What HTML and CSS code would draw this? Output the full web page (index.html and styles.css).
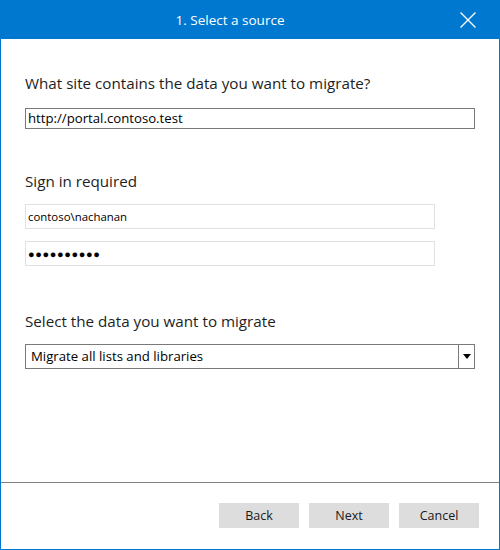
FILE: index.html
```html
<!DOCTYPE html>
<html>
<head>
<meta charset="utf-8">
<link rel="stylesheet" href="styles.css">
</head>
<body>
<div class="window">
  <div class="titlebar">
    <div class="title">1. Select a source</div>
    <div class="close">
      <svg width="16" height="16" viewBox="0 0 16 16"><path d="M0.5 0.5 L15.5 15.5 M15.5 0.5 L0.5 15.5" stroke="#ffffff" stroke-width="1.4" fill="none"/></svg>
    </div>
  </div>
  <div class="content">
    <div class="heading h1">What site contains the data you want to migrate?</div>
    <div class="field url">http://portal.contoso.test</div>
    <div class="heading h2">Sign in required</div>
    <div class="field small user">contoso\nachanan</div>
    <div class="field small pass">●●●●●●●●●●</div>
    <div class="heading h3">Select the data you want to migrate</div>
    <div class="select">
      <div class="select-text">Migrate all lists and libraries</div>
      <div class="select-btn"><svg width="8" height="5" viewBox="0 0 8 5"><path d="M0 0 H8 L4 5 Z" fill="#000"/></svg></div>
    </div>
  </div>
  <div class="footer">
    <div class="btn">Back</div>
    <div class="btn">Next</div>
    <div class="btn">Cancel</div>
  </div>
</div>
</body>
</html>
```
FILE: styles.css
```css
html, body { margin: 0; padding: 0; background: #fff; }
body { font-family: "Open Sans", "Noto Sans", sans-serif; color: #1a1a1a; }
.window {
  width: 500px; height: 550px; box-sizing: border-box;
  border: 1px solid #0078d0; border-top: none;
  display: flex; flex-direction: column;
}
.titlebar {
  height: 39px; margin: 0 -1px; background: #0078d0; color: #fff;
  display: flex; align-items: center; position: relative;
}
.title { width: 460px; text-align: center; font-size: 13.5px; padding-top: 1px; }
.close { position: absolute; left: 460px; top: 12px; width: 16px; height: 16px; }
.close svg { display: block; }
.content { flex: 1; padding: 0 24px; display: flex; flex-direction: column; align-items: flex-start; }
.heading { font-size: 15.2px; line-height: 20px; color: #1e1e1e; }
.h1 { margin-top: 34px; }
.field { box-sizing: border-box; border: 1px solid #7a7a7a; background: #fff; width: 450px; height: 21px; font-size: 13.2px; line-height: 19px; padding-left: 2px; color: #000; }
.url { margin-top: 15px; }
.h2 { margin-top: 42px; }
.small { border-color: #e0e0e6; height: 25px; width: 410px; font-size: 11.4px; line-height: 23px; }
.user { margin-top: 13px; }
.pass { margin-top: 12px; font-size: 11px; letter-spacing: 0.6px; }
.h3 { margin-top: 45px; }
.select { margin-top: 13px; box-sizing: border-box; width: 450px; height: 25px; border: 1px solid #7a7a7a; display: flex; }
.select-text { flex: 1; font-size: 13.2px; line-height: 23px; padding-left: 5px; color: #000; }
.select-btn { width: 15px; border-left: 1px solid #7a7a7a; display: flex; align-items: center; justify-content: center; }
.select-btn svg { display: block; }
.footer { height: 67px; border-top: 1px solid #808080; display: flex; justify-content: flex-end; gap: 10px; padding: 20px 20px 0 0; box-sizing: border-box; }
.btn { width: 80px; height: 25px; background: #dddddd; font-size: 12.5px; line-height: 25px; text-align: center; color: #1a1a1a; }
```
